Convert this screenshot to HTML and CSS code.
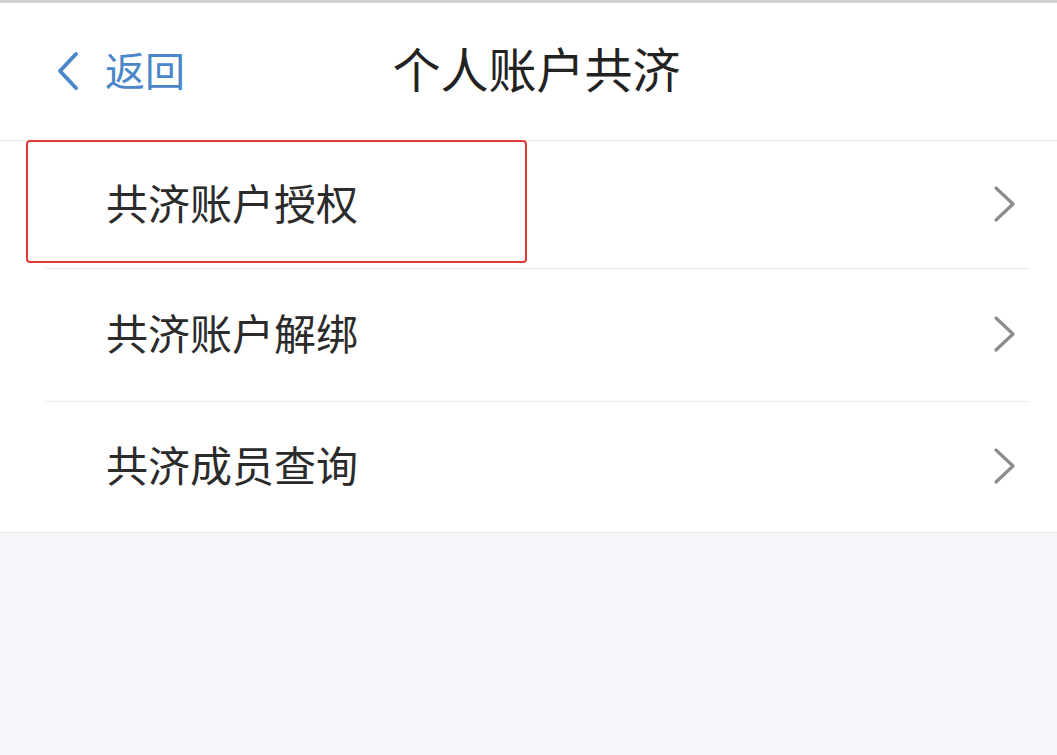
FILE: index.html
```html
<!DOCTYPE html>
<html lang="zh-CN">
<head>
<meta charset="utf-8">
<title>个人账户共济</title>
<link rel="stylesheet" href="styles.css">
</head>
<body>
<div class="page">
  <header class="header">
    <div class="back">
      <svg class="back-icon" width="24" height="40" viewBox="0 0 24 40"><path d="M20 3 L4 20 L20 37" fill="none" stroke="#4a86c8" stroke-width="4" stroke-linecap="round" stroke-linejoin="round"/></svg>
      <span class="back-text">返回</span>
    </div>
    <h1 class="title">个人账户共济</h1>
    <div class="spacer"></div>
  </header>
  <ul class="list">
    <li class="row">
      <span class="row-text">共济账户授权</span>
      <svg class="chev" width="24" height="36" viewBox="0 0 24 36"><path d="M3 2 L20 18 L3 34" fill="none" stroke="#8c8c8c" stroke-width="3.2" stroke-linecap="round" stroke-linejoin="round"/></svg>
      <div class="highlight"></div>
    </li>
    <li class="row">
      <span class="row-text">共济账户解绑</span>
      <svg class="chev" width="24" height="36" viewBox="0 0 24 36"><path d="M3 2 L20 18 L3 34" fill="none" stroke="#8c8c8c" stroke-width="3.2" stroke-linecap="round" stroke-linejoin="round"/></svg>
    </li>
    <li class="row">
      <span class="row-text">共济成员查询</span>
      <svg class="chev" width="24" height="36" viewBox="0 0 24 36"><path d="M3 2 L20 18 L3 34" fill="none" stroke="#8c8c8c" stroke-width="3.2" stroke-linecap="round" stroke-linejoin="round"/></svg>
    </li>
  </ul>
</div>
</body>
</html>
```
FILE: styles.css
```css
* { box-sizing: border-box; }
html, body { margin: 0; padding: 0; }
body {
  background: #f5f6fa;
  font-family: "Noto Sans CJK SC", "Noto Sans", sans-serif;
  width: 1057px;
  height: 755px;
  overflow: hidden;
}
.page {
  border-top: 3px solid #d2d2d2;
}
.header {
  height: 138px;
  background: #fff;
  border-bottom: 1px solid #ebebeb;
  display: grid;
  grid-template-columns: 1fr auto 1fr;
  align-items: center;
}
.back {
  display: flex;
  align-items: center;
  padding-left: 56px;
  gap: 25px;
  color: #4a86c8;
  margin-top: -6px;
}
.back-icon { display: block; margin-top: 4px; }
.back-text {
  font-size: 40px;
  line-height: 1;
}
.title {
  margin: 0;
  font-size: 48px;
  font-weight: 400;
  color: #222;
  line-height: 1;
  padding-left: 16px;
  margin-top: -10px;
}
.list {
  list-style: none;
  margin: 0;
  padding: 0;
  background: #fff;
  border-bottom: 1px solid #e8e8ea;
}
.row {
  position: relative;
  height: 133px;
  margin-left: 45px;
  margin-right: 28px;
  display: flex;
  align-items: center;
  justify-content: space-between;
  padding-left: 61px;
  padding-right: 12px;
  border-bottom: 1px solid #ebebeb;
}
.row:first-child { height: 128px; }
.row:last-child { border-bottom: none; height: 130px; }
.row-text {
  font-size: 42px;
  color: #2b2b2b;
  line-height: 1;
  margin-top: -6px;
}
.chev { display: block; margin-top: -2px; }
.highlight {
  position: absolute;
  left: -19px;
  top: -1px;
  width: 501px;
  height: 123px;
  border: 2.5px solid #e03a35;
  border-radius: 4px;
  pointer-events: none;
}
```
